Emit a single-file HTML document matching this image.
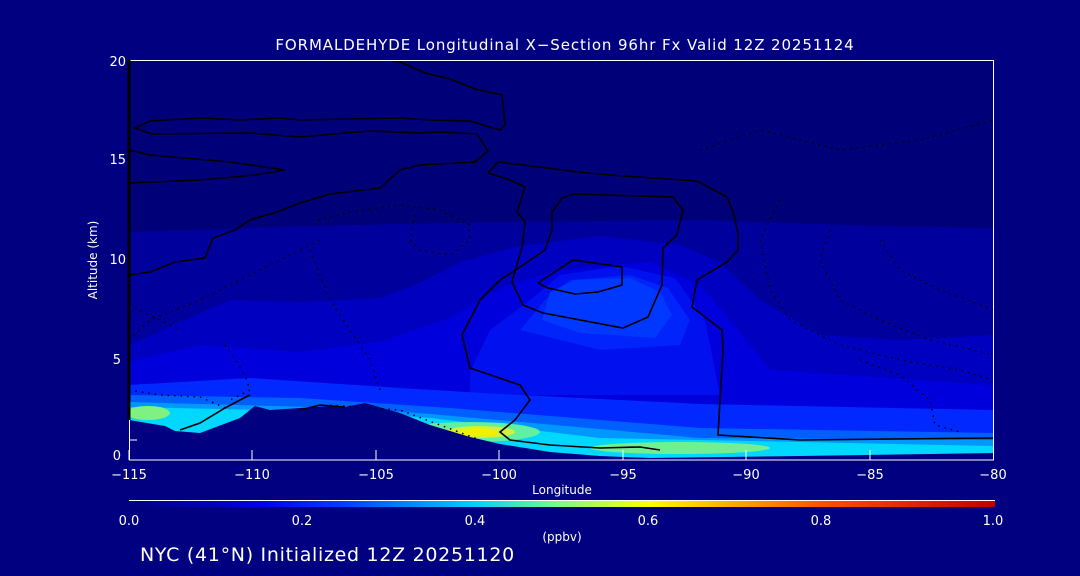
<!DOCTYPE html>
<html><head><meta charset="utf-8"><style>
html,body{margin:0;padding:0;background:#000080;width:1080px;height:576px;overflow:hidden}
svg{display:block}
text{font-family:"DejaVu Sans","Liberation Sans",sans-serif;fill:#fff}
</style></head><body>
<svg width="1080" height="576" viewBox="0 0 1080 576" xmlns="http://www.w3.org/2000/svg">
<defs>
<linearGradient id="cb" x1="0" x2="1" y1="0" y2="0">
<stop offset="0" stop-color="#000080"/>
<stop offset="0.15" stop-color="#0000e0"/>
<stop offset="0.25" stop-color="#0040ff"/>
<stop offset="0.4" stop-color="#00d0ff"/>
<stop offset="0.5" stop-color="#80ff80"/>
<stop offset="0.6" stop-color="#ffff00"/>
<stop offset="0.8" stop-color="#ff5000"/>
<stop offset="1" stop-color="#c00000"/>
</linearGradient>
<clipPath id="pc"><rect x="129" y="60" width="865" height="400"/></clipPath>
</defs>
<rect width="1080" height="576" fill="#000080"/>
<g clip-path="url(#pc)">
<rect x="129" y="60" width="865" height="400" fill="#000078"/>
<polygon fill="#00009c" points="129,232 300,226 500,222 700,220 850,225 994,228 994,460 129,460"/>
<polygon fill="#0000c0" points="129,345 180,322 230,300 300,302 380,298 420,283 460,262 520,246 600,236 680,245 720,262 760,300 820,335 900,340 994,335 994,460 129,460"/>
<polygon fill="#0000dc" points="129,362 200,345 300,352 380,342 450,318 500,288 560,270 650,262 700,285 730,320 770,370 994,385 994,460 129,460"/>
<polygon fill="#0010ee" points="470,372 490,330 530,300 560,275 620,266 675,278 705,320 720,395 470,395"/>
<polygon fill="#0024fa" points="520,330 545,300 570,280 630,275 668,288 690,320 680,345 600,350"/>
<polygon fill="#0038ff" points="542,320 550,292 575,280 630,278 660,292 672,315 655,338 580,333"/>
<polygon fill="#0028ff" points="129,385 250,378 400,388 500,394 700,404 994,410 994,460 129,460"/>
<polygon fill="#0060ff" points="129,395 300,398 450,408 700,428 994,433 994,460 129,460"/>
<polygon fill="#0098ff" points="129,402 200,404 350,408 430,414 700,438 994,440 994,460 129,460"/>
<polygon fill="#00d8ff" points="129,407 350,412 430,418 600,438 994,446 994,460 129,460"/>
<ellipse cx="470" cy="432" rx="70" ry="10" fill="#60f0a0"/>
<ellipse cx="680" cy="448" rx="90" ry="6" fill="#70f090"/>
<ellipse cx="148" cy="413" rx="22" ry="7" fill="#80f080"/>
<ellipse cx="480" cy="432" rx="35" ry="6" fill="#d0f040"/>
<ellipse cx="478" cy="432" rx="20" ry="4" fill="#f0f000"/>
<polygon fill="#000080" points="129,420 165,426 175,431 200,433 240,418 255,406 270,410 300,408 330,406 345,407 365,403 400,413 430,425 470,437 500,444 550,452 600,456 650,458 800,456 994,453 994,470 129,470"/>
<g fill="none" stroke="#000" stroke-width="1.6">
<polyline points="375,58 400,62 425,73 450,79 475,89 502,95 505,125 500,130 470,121 430,120 400,118 350,119 300,120 280,118 240,120 200,118 150,121 135,128 152,134 250,133 300,137 345,133 370,131 420,133 440,132 477,134 488,151 475,162 420,165 400,170 380,188 330,194 300,203 280,211 250,220 235,230 213,238 205,258 175,262 150,272 129,275"/>
<polyline points="129,150 150,155 230,162 285,170 255,175 200,180 129,183"/>
<polyline points="488,173 498,162 587,173 623,176 697,181 727,197 733,212 738,233 738,250 727,262 697,280 692,307 700,313 722,330 723,350 720,400 718,435 800,440 994,438"/>
<polyline points="488,173 510,180 525,187 517,212 525,222 522,247 512,282 523,305 543,313 623,328 648,317 662,285 663,248 677,235 683,210 673,197 573,194 562,198 552,212 552,230 545,250 523,265 500,280 480,300 462,335 470,368 520,385 530,400 515,420 500,432 510,440 550,445 600,448 640,447 660,450"/>
<polyline points="538,283 573,260 622,267 622,285 598,292 575,294 548,288 538,283"/>
<polyline points="180,430 200,423 225,408 240,400 250,395"/>
<polyline points="300,410 320,405 345,407"/>
</g>
<g fill="none" stroke="#000" stroke-width="1.5" stroke-dasharray="1.5 5">
<polyline points="318,220 350,212 400,205 440,210 470,225"/>
<polyline points="415,215 410,240 420,250 450,255 470,240 468,222"/>
<polyline points="129,305 160,320 180,330"/>
<polyline points="129,340 150,320 200,300 260,270 320,240"/>
<polyline points="225,345 245,375 250,390 230,400"/>
<polyline points="310,250 330,300 370,360 380,390"/>
<polyline points="780,200 760,240 770,290 790,320 840,345 900,360 960,370 994,380"/>
<polyline points="830,230 820,260 840,300 880,320 930,340 994,355"/>
<polyline points="880,240 900,270 940,290 994,310"/>
<polyline points="700,150 760,130 840,150 920,140 994,120"/>
<polyline points="129,390 160,395 200,397 230,410"/>
<polyline points="330,405 400,410 440,425 480,440"/>
<polyline points="860,360 900,375 930,400 935,425 960,432"/>
</g>
</g>
<rect x="129.5" y="60.5" width="864" height="399.5" fill="none" stroke="#fff" stroke-width="1"/>
<line x1="129" y1="60" x2="129" y2="420" stroke="#000" stroke-width="3"/>
<g stroke="#fff" stroke-width="1">
<line x1="129" y1="460" x2="129" y2="450"/><line x1="252" y1="460" x2="252" y2="450"/><line x1="376" y1="460" x2="376" y2="450"/><line x1="499" y1="460" x2="499" y2="450"/><line x1="623" y1="460" x2="623" y2="450"/><line x1="746" y1="460" x2="746" y2="450"/><line x1="870" y1="460" x2="870" y2="450"/>
<line x1="129" y1="440" x2="137" y2="440"/>
</g>
<text x="565" y="50" font-size="15" letter-spacing="0.9" text-anchor="middle">FORMALDEHYDE Longitudinal X−Section 96hr  Fx Valid 12Z 20251124</text>
<g font-size="13" text-anchor="end">
<text x="126" y="66">20</text><text x="126" y="164">15</text><text x="126" y="264">10</text><text x="121" y="364">5</text><text x="121" y="460">0</text>
</g>
<text font-size="12" transform="translate(97,260) rotate(-90)" text-anchor="middle">Altitude (km)</text>
<g font-size="13" text-anchor="middle">
<text x="129" y="479">−115</text><text x="252" y="479">−110</text><text x="376" y="479">−105</text><text x="499" y="479">−100</text><text x="623" y="479">−95</text><text x="746" y="479">−90</text><text x="870" y="479">−85</text><text x="993" y="479">−80</text>
</g>
<text x="562" y="494" font-size="12" text-anchor="middle">Longitude</text>
<line x1="129" y1="500.5" x2="995" y2="500.5" stroke="#fff"/>
<rect x="129" y="501" width="866" height="6" fill="url(#cb)"/>
<g font-size="13" text-anchor="middle">
<text x="129" y="525">0.0</text><text x="302" y="525">0.2</text><text x="475" y="525">0.4</text><text x="648" y="525">0.6</text><text x="821" y="525">0.8</text><text x="993" y="525">1.0</text>
</g>
<text x="562" y="541" font-size="12" text-anchor="middle">(ppbv)</text>
<text x="140" y="561" font-size="19" letter-spacing="0.7">NYC (41°N) Initialized 12Z 20251120</text>
</svg>
</body></html>
